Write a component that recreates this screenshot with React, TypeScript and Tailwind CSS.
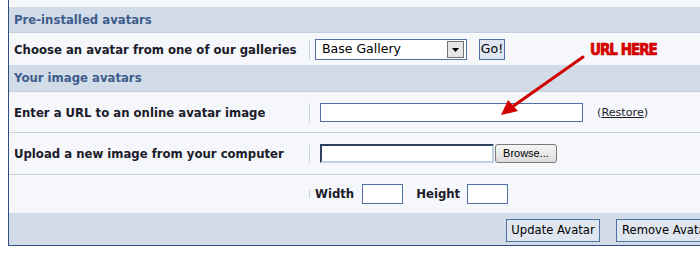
import React from "react";

const font = { fontFamily: '"DejaVu Sans", Verdana, sans-serif' };

function Sep({ h = "h-[20px]" }: { h?: string }) {
  return <div className={`w-px ${h} bg-[#c6d2e2]`} />;
}

export default function App() {
  return (
    <div className="relative w-[700px] h-[254px] overflow-hidden bg-white" style={font}>
      <div className="ml-[8px] w-[720px] border-l border-b border-[#2f4d7e] bg-[#f5f7fb]">
        <div className="h-[7px]" />
        {/* Header 1 */}
        <div className="h-[26px] bg-[#d1dce8] border-b border-[#c2cfe0] flex items-center pl-[5px] pt-[2px] text-[11.7px] font-bold text-[#405d8c]">
          Pre-installed avatars
        </div>
        {/* Row 1 */}
        <div className="h-[32px] flex items-center pt-px">
          <div className="w-[300px] pl-[5px] pt-[2px] text-[11.7px] font-bold text-[#1b1b2a]">
            Choose an avatar from one of our galleries
          </div>
          <Sep />
          <div className="ml-[5px] w-[152px] h-[21px] bg-white border border-[#4e72a6] flex items-center justify-between pl-[6px] pr-[2px]">
            <span className="text-[12.5px] text-black">Base Gallery</span>
            <div className="w-[17px] h-[17px] bg-[#e6e6e6] border border-[#707070] flex items-center justify-center">
              <svg width="7" height="4" viewBox="0 0 7 4">
                <path d="M0 0 H7 L3.5 4 Z" fill="#000" />
              </svg>
            </div>
          </div>
          <div className="ml-[12px] w-[26px] h-[21px] bg-[#dfe6ef] border border-[#4e72a6] flex items-center justify-center text-[12.5px] text-black">
            Go!
          </div>
        </div>
        {/* Header 2 */}
        <div className="h-[27px] bg-[#d1dce8] border-b border-[#c2cfe0] flex items-center pl-[5px] pt-[2px] text-[11.7px] font-bold text-[#405d8c]">
          Your image avatars
        </div>
        {/* Row URL */}
        <div className="h-[41px] border-b border-[#c6d2e2] flex items-center pt-px">
          <div className="w-[300px] pl-[5px] pt-[2px] text-[11.7px] font-bold text-[#1b1b2a]">
            Enter a URL to an online avatar image
          </div>
          <Sep />
          <div className="ml-[10px] w-[263px] h-[19px] bg-white border border-[#4e72a6]" />
          <div className="ml-[14px] pt-px text-[11.2px] text-[#1b1b2a]">
            (<span className="underline">Restore</span>)
          </div>
        </div>
        {/* Row upload */}
        <div className="h-[42px] border-b border-[#c6d2e2] flex items-center">
          <div className="w-[300px] pl-[5px] pt-[2px] text-[11.7px] font-bold text-[#1b1b2a]">
            Upload a new image from your computer
          </div>
          <Sep h="h-[18px]" />
          <div className="ml-[10px] w-[174px] h-[19px] bg-white border-2 border-t-[#2d4263] border-l-[#2d4263] border-b-[#c2d0e4] border-r-[#c2d0e4]" />
          <div
            className="ml-px w-[62px] h-[19px] rounded-[3px] border border-[#7a7a7a] bg-gradient-to-b from-[#f6f6f6] to-[#dcdcdc] flex items-center justify-center text-[11px] text-black"
            style={{ fontFamily: '"Liberation Sans", Arial, sans-serif' }}
          >
            Browse...
          </div>
        </div>
        {/* Row width/height */}
        <div className="h-[38px] flex items-center">
          <div className="w-[300px]" />
          <Sep h="h-[8px]" />
          <div className="ml-[5px] pt-[2px] text-[11.7px] font-bold text-[#1b1b2a]">Width</div>
          <div className="ml-[8px] w-[41px] h-[20px] bg-white border border-[#4e72a6]" />
          <div className="ml-[13px] pt-[2px] text-[11.7px] font-bold text-[#1b1b2a]">Height</div>
          <div className="ml-[7px] w-[41px] h-[20px] bg-white border border-[#4e72a6]" />
        </div>
        {/* Footer */}
        <div className="h-[32px] bg-[#d1dce8] flex items-center pt-[3px] pl-[497px] gap-[16px]">
          <div className="h-[23px] w-[94px] pt-px bg-[#dfe6ef] border border-[#4e72a6] flex items-center justify-center text-[11.6px] text-black whitespace-nowrap">
            Update Avatar
          </div>
          <div className="h-[23px] px-[5px] pt-px bg-[#dfe6ef] border border-[#4e72a6] flex items-center text-[11.6px] text-black whitespace-nowrap">
            Remove Avatar
          </div>
        </div>
      </div>

      {/* Annotation overlay */}
      <svg className="absolute left-0 top-0 pointer-events-none" width="700" height="254">
        <line x1="583" y1="57" x2="512" y2="107" stroke="#d10000" strokeWidth="3" strokeLinecap="round" />
        <path d="M501 115 L508 100 L518 111 Z" fill="#d10000" />
      </svg>
      <div
        className="absolute left-[590px] top-[43px] text-[15px] font-black text-[#d40000] tracking-[-1px] leading-none"
        style={{
          fontFamily: '"DejaVu Sans Condensed", "DejaVu Sans", sans-serif',
          WebkitTextStroke: "0.7px #d40000",
          textShadow: "0 0 1px #fff, 0 0 1px #fff",
        }}
      >
        URL HERE
      </div>
    </div>
  );
}
